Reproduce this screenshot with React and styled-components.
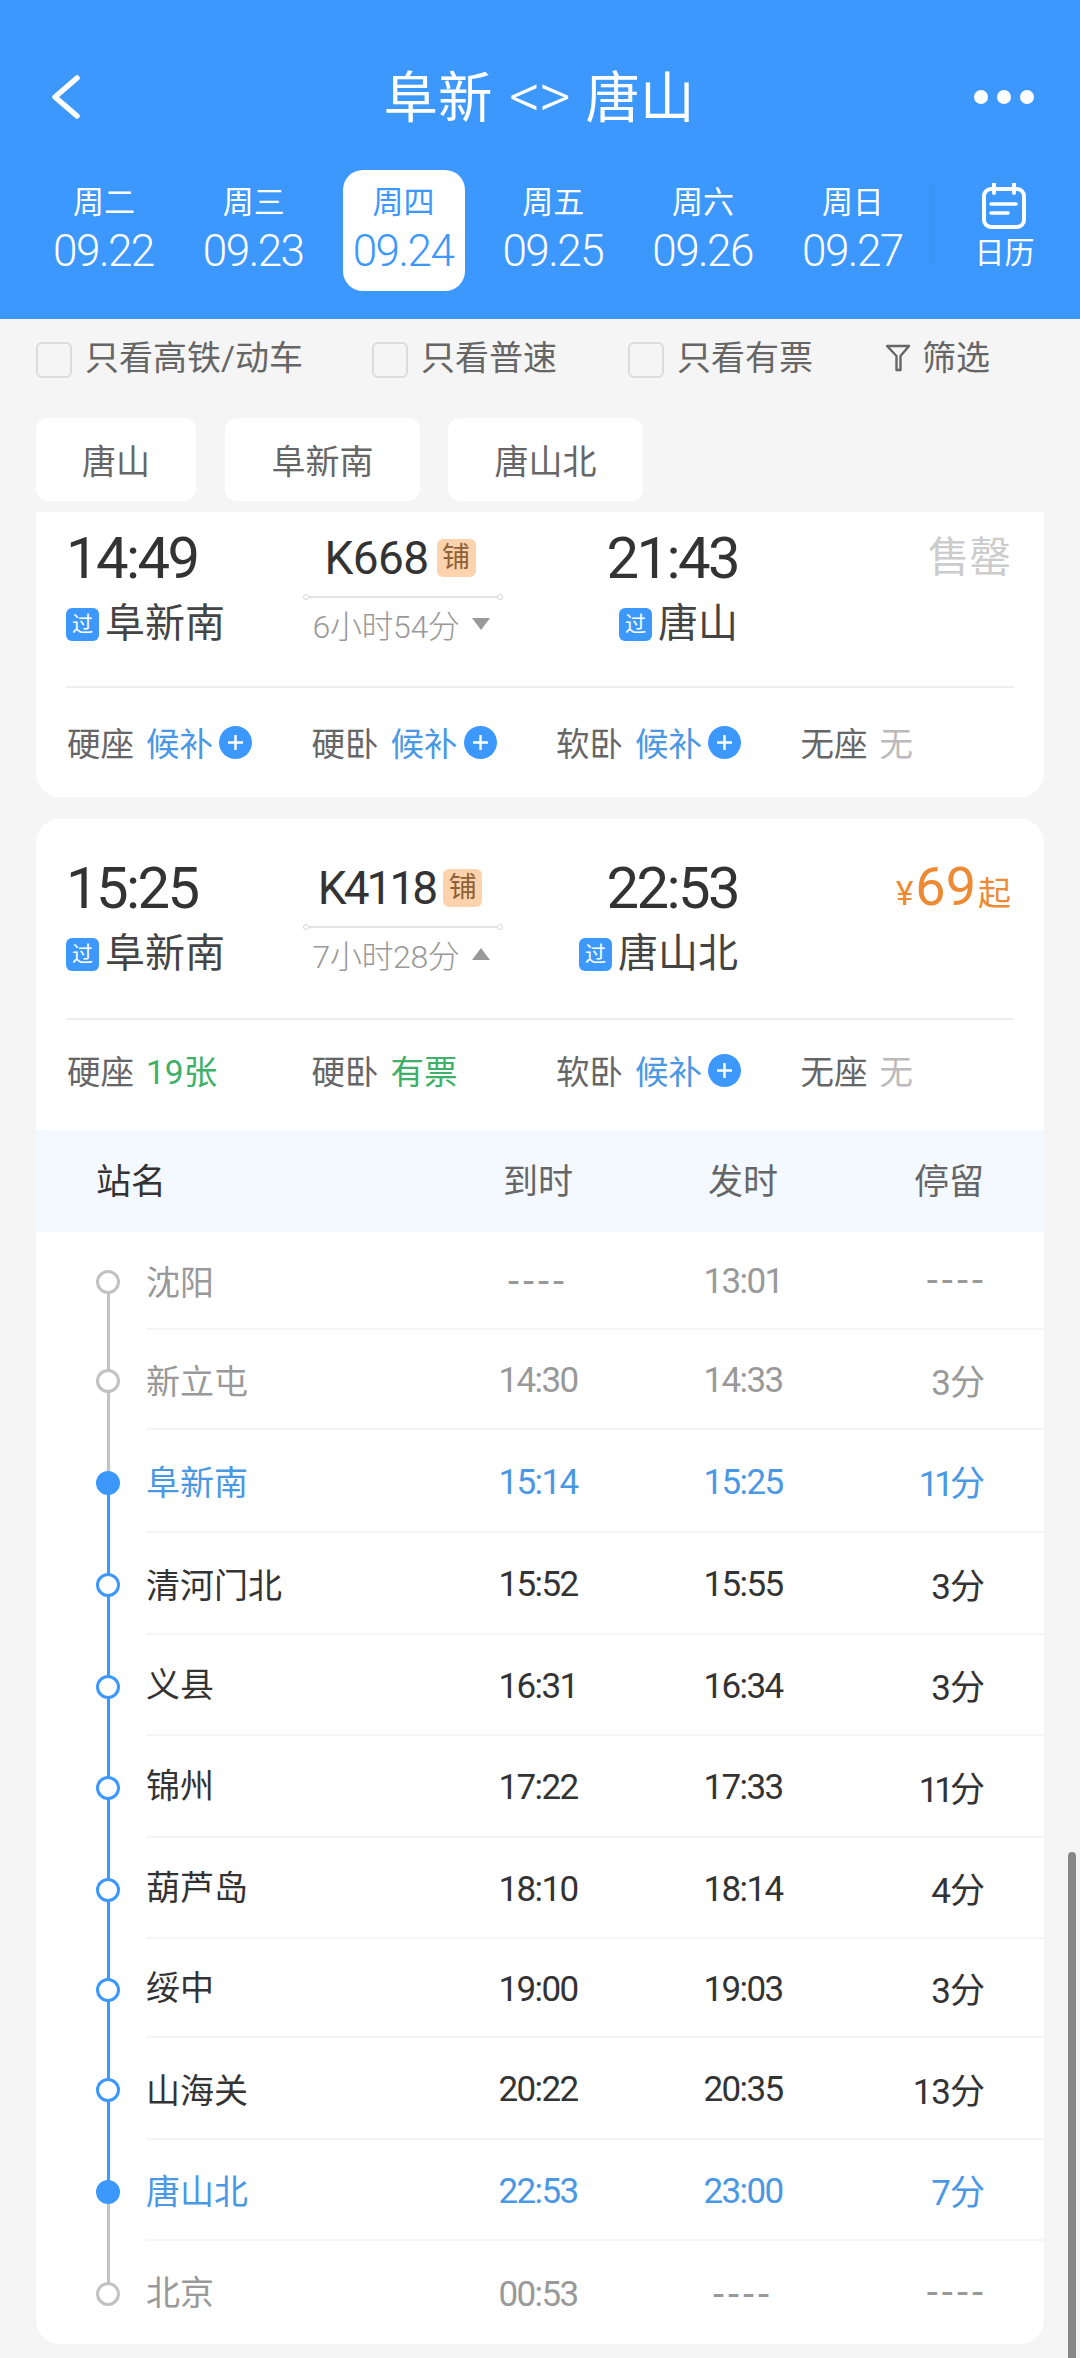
import React from "react";
import styled, { createGlobalStyle } from "styled-components";

const Global = createGlobalStyle`
  html, body { margin: 0; padding: 0; background: #f5f5f5; }
  body { font-family: Roboto, "Noto Sans CJK SC", sans-serif; font-weight: 300; }
  * { box-sizing: border-box; }
`;

const BLUE = "#3c98fc";
const TEXT_BLUE = "#4a98e4";

const Page = styled.div`
  position: relative;
  width: 1080px;
  height: 2358px;
  overflow: hidden;
  background: #f5f5f5;
`;
const Header = styled.header`
  height: 319px;
  background: ${BLUE};
  color: #fff;
`;
const TitleBar = styled.div`
  height: 170px;
  padding: 24px 46px 0 48px;
  display: grid;
  grid-template-columns: 100px 1fr 100px;
  align-items: center;
`;
const BackIcon = styled.svg`
  display: block;
`;
const Title = styled.h1`
  margin: 0 0 0 -4px;
  font-size: 54.5px;
  font-weight: 400;
  line-height: 60px;
  text-align: center;
  word-spacing: 3px;
  white-space: nowrap;
`;
const TitleArrows = styled.span`
  font-size: 62px;
  font-weight: 300;
  line-height: 60px;
  letter-spacing: -2px;
`;
const Dots = styled.div`
  display: flex;
  justify-content: flex-end;
  gap: 9px;
`;
const Dot = styled.span`
  width: 14px;
  height: 14px;
  border-radius: 50%;
  background: #fff;
`;
const DateBar = styled.div`
  display: flex;
  padding-left: 30px;
  height: 121px;
`;
const DateTab = styled.div`
  width: 149.8px;
  display: flex;
  justify-content: center;
`;
const DateBox = styled.div`
  width: 122px;
  height: 121px;
  border-radius: 20px;
  background: ${(p) => (p.$active ? "#fff" : "transparent")};
  color: ${(p) => (p.$active ? BLUE : "#fff")};
  display: flex;
  flex-direction: column;
  align-items: center;
  padding-top: 15px;
`;
const Week = styled.div`
  font-size: 31px;
  line-height: 36px;
  font-weight: 400;
  margin-left: -2px;
`;
const DateNum = styled.div`
  font-size: 44px;
  line-height: 52px;
  letter-spacing: -1.5px;
  margin: 4px 0 0 -3px;
  white-space: nowrap;
`;
const CalendarTab = styled.div`
  position: relative;
  flex: 1;
  display: flex;
  flex-direction: column;
  align-items: center;
  padding: 13px 0 0 0;
  &::before {
    content: "";
    position: absolute;
    left: -1px;
    top: 12px;
    width: 8px;
    height: 82px;
    background: linear-gradient(90deg, rgba(40, 110, 200, 0.02), rgba(40, 110, 200, 0.1) 60%, rgba(40, 110, 200, 0));
  }
`;
const CalendarLabel = styled.div`
  font-size: 30px;
  line-height: 34px;
  margin-top: 7px;
  font-weight: 400;
`;

const FilterRow = styled.div`
  height: 78px;
  padding-left: 36px;
  display: grid;
  grid-template-columns: 336px 256px 257px auto;
  align-items: center;
`;
const FilterItem = styled.label`
  display: flex;
  align-items: center;
  gap: 13px;
  font-size: 34px;
  font-weight: 400;
  color: #666;
  line-height: 40px;
  white-space: nowrap;
`;
const Checkbox = styled.span`
  width: 36px;
  height: 36px;
  flex: none;
  border-radius: 6px;
  border: 2px solid #dcdcdc;
  background: #f5f5f5;
  margin-top: 3px;
`;
const FilterButton = styled(FilterItem)`
  gap: 11px;
`;
const ChipRow = styled.div`
  display: flex;
  padding: 21px 0 0 36px;
`;
const Chip = styled.div`
  height: 83px;
  width: ${(p) => p.$w}px;
  margin-right: ${(p) => p.$gap}px;
  background: #fff;
  border-radius: 12px;
  display: flex;
  align-items: center;
  justify-content: center;
  font-size: 34px;
  font-weight: 400;
  color: #666;
`;

const CardList = styled.div`
  padding: 11px 36px 0;
  display: flex;
  flex-direction: column;
  gap: 22px;
`;
const Card = styled.section`
  background: #fff;
  border-radius: ${(p) => (p.$clipped ? "0 0 24px 24px" : "24px")};
  overflow: hidden;
`;
const Summary = styled.div`
  margin: 0 30px;
  padding-top: ${(p) => p.$top}px;
  height: ${(p) => p.$height}px;
  border-bottom: 2px solid #eeeeee;
  display: grid;
  grid-template-columns: 224px 226px 222px 1fr;
`;
const Endpoint = styled.div`
  display: flex;
  flex-direction: column;
  align-items: ${(p) => (p.$right ? "flex-end" : "flex-start")};
`;
const Clock = styled.div`
  font-size: 58px;
  line-height: 52px;
  letter-spacing: -2.6px;
  color: #333;
  font-weight: 400;
`;
const Station = styled.div`
  margin-top: 14px;
  height: 52px;
  display: flex;
  align-items: center;
  gap: 6px;
  font-size: 40px;
  font-weight: 400;
  color: #444;
  line-height: 52px;
  white-space: nowrap;
`;
const PassBadge = styled.span`
  width: 33px;
  height: 33px;
  border-radius: 6px;
  background: ${BLUE};
  color: #fff;
  font-size: 21px;
  line-height: 33px;
  text-align: center;
`;
const Middle = styled.div`
  display: flex;
  flex-direction: column;
  align-items: center;
`;
const TrainRow = styled.div`
  height: 52px;
  display: flex;
  align-items: center;
  gap: 8px;
  padding-right: 6px;
`;
const TrainNo = styled.span`
  font-size: 46px;
  letter-spacing: ${(p) => p.$ls}px;
  color: #333;
  font-weight: 400;
`;
const BerthBadge = styled.span`
  width: 39px;
  height: 38px;
  border-radius: 6px;
  background: #fdd3ae;
  color: #8d6238;
  font-size: 28px;
  line-height: 38px;
  text-align: center;
  font-weight: 400;
`;
const RouteLine = styled.div`
  width: 200px;
  height: 8px;
  margin-top: 9px;
  display: flex;
  align-items: center;
`;
const RouteEnd = styled.span`
  width: 6px;
  height: 6px;
  flex: none;
  border-radius: 50%;
  border: 1px solid #d8d8d8;
  background: #fff;
`;
const RouteBar = styled.span`
  flex: 1;
  height: 2px;
  background: #e2e2e2;
`;
const Duration = styled.div`
  margin-top: 2px;
  height: 42px;
  display: flex;
  align-items: center;
  gap: 12px;
  font-size: 32px;
  letter-spacing: -0.4px;
  color: #999;
  padding-right: 2px;
  white-space: nowrap;
`;
const Price = styled.div`
  justify-self: end;
  margin: -3px 3px 0 0;
  color: #ec8a35;
  display: flex;
  align-items: baseline;
  height: 56px;
  line-height: 56px;
`;
const PriceSmall = styled.span`
  font-size: 33px;
  font-weight: 400;
`;
const PriceBig = styled.span`
  font-size: 54px;
  margin: 0 2px;
  font-weight: 400;
`;
const SoldOut = styled.div`
  justify-self: end;
  margin-right: 3px;
  font-size: 41.5px;
  line-height: 52px;
  color: #ccc;
  font-weight: 400;
`;
const Seats = styled.div`
  margin: 0 0 0 30px;
  height: ${(p) => p.$height}px;
  padding-bottom: ${(p) => p.$bottom}px;
  display: grid;
  grid-template-columns: repeat(4, 244.5px);
  align-items: center;
`;
const Seat = styled.div`
  display: flex;
  align-items: center;
  font-size: 33.5px;
  font-weight: 400;
  color: #666;
  padding-left: 1px;
  white-space: nowrap;
`;
const SeatValue = styled.span`
  margin-left: 12px;
  color: ${(p) => p.$color};
`;
const PlusCircle = styled.svg`
  width: 33px;
  height: 33px;
  margin-left: 6px;
  margin-top: 2px;
`;
const TableHead = styled.div`
  height: 102px;
  background: #f4f9ff;
  padding: 0 0 5px 60px;
  display: grid;
  grid-template-columns: 338px 208px 202px 140px;
  align-items: center;
  font-size: 35px;
  font-weight: 400;
  color: #666;
`;
const HeadName = styled.div`
  color: #333;
`;
const HeadCell = styled.div`
  text-align: ${(p) => p.$align};
`;
const StopRow = styled.div`
  position: relative;
  height: ${(p) => p.$h}px;
  padding-left: 110px;
`;
const StopBody = styled.div`
  height: 100%;
  border-bottom: ${(p) => (p.$last ? "none" : "2px solid #f5f5f5")};
  display: grid;
  grid-template-columns: 288px 208px 202px 140px;
  align-items: center;
  font-size: 34px;
  font-weight: 400;
  color: ${(p) => p.$color};
`;
const StopName = styled.div`
  white-space: nowrap;
  margin-bottom: ${(p) => (p.$up ? 5 : 0)}px;
`;
const StopCell = styled.div`
  text-align: center;
  font-size: 35px;
  letter-spacing: -1.6px;
  padding-top: 3px;
`;
const StopStay = styled.div`
  text-align: right;
  font-size: 35px;
  letter-spacing: ${(p) => p.$ls}px;
  padding-right: ${(p) => -p.$ls - 1}px;
`;
const Dashes = styled.span`
  font-size: 40px;
  letter-spacing: 4px;
  margin-right: ${(p) => (p.$end ? -3 : 0)}px;
`;
const Node = styled.span`
  position: absolute;
  left: 60px;
  top: calc(50% - 11px);
  z-index: 2;
  width: 24px;
  height: 24px;
  border-radius: 50%;
  background: ${(p) => (p.$filled ? BLUE : "#fff")};
  border: 3px solid ${(p) => p.$color};
`;
const Segment = styled.span`
  position: absolute;
  left: 71px;
  top: calc(50% + 1px);
  z-index: 1;
  width: 3px;
  height: ${(p) => p.$h}px;
  background: ${(p) => p.$color};
`;
const ScrollThumb = styled.div`
  position: absolute;
  right: 4px;
  top: 1852px;
  bottom: 0;
  width: 8px;
  background: #888;
  border-radius: 4px 4px 0 0;
`;

const Plus = () => (
  <PlusCircle viewBox="0 0 33 33">
    <circle cx="16.5" cy="16.5" r="16.5" fill={BLUE} />
    <path d="M16.5 9v15M9 16.5h15" stroke="#fff" strokeWidth="2.4" />
  </PlusCircle>
);
const Triangle = ({ up }) => (
  <svg width="20" height="14" viewBox="0 0 20 14">
    <path d={up ? "M10 1l9 12H1z" : "M10 13L1 1h18z"} fill="#999" />
  </svg>
);

const dates = [
  ["周二", "09.22"],
  ["周三", "09.23"],
  ["周四", "09.24"],
  ["周五", "09.25"],
  ["周六", "09.26"],
  ["周日", "09.27"],
];
const GRAY = "#999";
const DARK = "#333";
const GL = "#c2c2c2";
const stops = [
  { n: "沈阳", a: "----", d: "13:01", s: "----", c: GRAY, h: 98, line: GL, node: GL },
  { n: "新立屯", a: "14:30", d: "14:33", s: "3分", c: GRAY, h: 100, line: GL, node: GL },
  { n: "阜新南", a: "15:14", d: "15:25", s: "11分", c: TEXT_BLUE, h: 103, line: BLUE, node: BLUE, filled: true },
  { n: "清河门北", a: "15:52", d: "15:55", s: "3分", c: DARK, h: 102, line: BLUE, node: BLUE },
  { n: "义县", a: "16:31", d: "16:34", s: "3分", c: DARK, h: 101, line: BLUE, node: BLUE, up: true },
  { n: "锦州", a: "17:22", d: "17:33", s: "11分", c: DARK, h: 102, line: BLUE, node: BLUE, up: true },
  { n: "葫芦岛", a: "18:10", d: "18:14", s: "4分", c: DARK, h: 101, line: BLUE, node: BLUE, up: true },
  { n: "绥中", a: "19:00", d: "19:03", s: "3分", c: DARK, h: 99, line: BLUE, node: BLUE, up: true },
  { n: "山海关", a: "20:22", d: "20:35", s: "13分", c: DARK, h: 102, line: BLUE, node: BLUE },
  { n: "唐山北", a: "22:53", d: "23:00", s: "7分", c: TEXT_BLUE, h: 101, line: GL, node: BLUE, filled: true },
  { n: "北京", a: "00:53", d: "----", s: "----", c: GRAY, h: 103, node: GL, up: true },
];

const SeatCell = ({ label, value, color, plus }) => (
  <Seat>
    {label}
    <SeatValue $color={color}>{value}</SeatValue>
    {plus && <Plus />}
  </Seat>
);

const Train = ({ top, height, dep, arr, from, to, no, ls, dur, up, children }) => (
  <Summary $top={top} $height={height}>
    <Endpoint>
      <Clock>{dep}</Clock>
      <Station>
        <PassBadge>过</PassBadge>
        {from}
      </Station>
    </Endpoint>
    <Middle>
      <TrainRow>
        <TrainNo $ls={ls}>{no}</TrainNo>
        <BerthBadge>铺</BerthBadge>
      </TrainRow>
      <RouteLine>
        <RouteEnd />
        <RouteBar />
        <RouteEnd />
      </RouteLine>
      <Duration>
        {dur}
        <Triangle up={up} />
      </Duration>
    </Middle>
    <Endpoint $right>
      <Clock>{arr}</Clock>
      <Station>
        <PassBadge>过</PassBadge>
        {to}
      </Station>
    </Endpoint>
    {children}
  </Summary>
);

export default function App() {
  return (
    <Page>
      <Global />
      <Header>
        <TitleBar>
          <BackIcon width="36" height="48" viewBox="0 0 36 48">
            <path d="M29 5L7 24l22 19" fill="none" stroke="#fff" strokeWidth="5.5" strokeLinecap="round" strokeLinejoin="round" />
          </BackIcon>
          <Title>
            阜新 <TitleArrows>&lt;&gt;</TitleArrows> 唐山
          </Title>
          <Dots>
            <Dot />
            <Dot />
            <Dot />
          </Dots>
        </TitleBar>
        <DateBar>
          {dates.map(([w, d], i) => (
            <DateTab key={d}>
              <DateBox $active={i === 2}>
                <Week>{w}</Week>
                <DateNum>{d}</DateNum>
              </DateBox>
            </DateTab>
          ))}
          <CalendarTab>
            <svg width="46" height="46" viewBox="0 0 46 46">
              <rect x="3" y="6" width="40" height="38" rx="7" fill="none" stroke="#fff" strokeWidth="4" />
              <path d="M13 1v9M33 1v9" stroke="#fff" strokeWidth="4" strokeLinecap="round" />
              <path d="M10 21h25M10 30h17" stroke="#fff" strokeWidth="3.5" strokeLinecap="round" />
            </svg>
            <CalendarLabel>日历</CalendarLabel>
          </CalendarTab>
        </DateBar>
      </Header>

      <FilterRow>
        <FilterItem>
          <Checkbox />
          只看高铁/动车
        </FilterItem>
        <FilterItem>
          <Checkbox />
          只看普速
        </FilterItem>
        <FilterItem>
          <Checkbox />
          只看有票
        </FilterItem>
        <FilterButton>
          <svg width="26" height="28" viewBox="0 0 26 28">
            <path d="M2 2h22l-8.5 10v14l-4-0V12z" fill="none" stroke="#666" strokeWidth="2.4" strokeLinejoin="round" />
          </svg>
          筛选
        </FilterButton>
      </FilterRow>
      <ChipRow>
        <Chip $w={160} $gap={29}>唐山</Chip>
        <Chip $w={195} $gap={28}>阜新南</Chip>
        <Chip $w={195} $gap={0}>唐山北</Chip>
      </ChipRow>

      <CardList>
        <Card $clipped>
          <Train top={20} height={176} dep="14:49" arr="21:43" from="阜新南" to="唐山" no="K668" ls={-0.6} dur="6小时54分">
            <SoldOut>售罄</SoldOut>
          </Train>
          <Seats $height={109} $bottom={2}>
            <SeatCell label="硬座" value="候补" color={TEXT_BLUE} plus />
            <SeatCell label="硬卧" value="候补" color={TEXT_BLUE} plus />
            <SeatCell label="软卧" value="候补" color={TEXT_BLUE} plus />
            <SeatCell label="无座" value="无" color="#bbb" />
          </Seats>
        </Card>
        <Card>
          <Train top={43} height={201} dep="15:25" arr="22:53" from="阜新南" to="唐山北" no="K4118" ls={-3} dur="7小时28分" up>
            <Price>
              <PriceSmall>¥</PriceSmall>
              <PriceBig>69</PriceBig>
              <PriceSmall>起</PriceSmall>
            </Price>
          </Train>
          <Seats $height={110} $bottom={11}>
            <SeatCell label="硬座" value="19张" color="#3fb06a" />
            <SeatCell label="硬卧" value="有票" color="#3fb06a" />
            <SeatCell label="软卧" value="候补" color={TEXT_BLUE} plus />
            <SeatCell label="无座" value="无" color="#bbb" />
          </Seats>
          <TableHead>
            <HeadName>站名</HeadName>
            <HeadCell $align="center">到时</HeadCell>
            <HeadCell $align="center">发时</HeadCell>
            <HeadCell $align="right">停留</HeadCell>
          </TableHead>
          {stops.map((s, i) => {
            const show = (v) => (v === "----" ? <Dashes>{v}</Dashes> : v);
            return (
              <StopRow key={s.n} $h={s.h}>
                {s.line && <Segment $color={s.line} $h={s.h + 2} />}
                <Node $color={s.node} $filled={s.filled} />
                <StopBody $color={s.c} $last={i === stops.length - 1}>
                  <StopName $up={s.up}>{s.n}</StopName>
                  <StopCell>{show(s.a)}</StopCell>
                  <StopCell>{show(s.d)}</StopCell>
                  <StopStay $ls={s.s === "11分" ? -4 : -1}>
                    {s.s === "----" ? <Dashes $end>{s.s}</Dashes> : s.s}
                  </StopStay>
                </StopBody>
              </StopRow>
            );
          })}
        </Card>
      </CardList>
      <ScrollThumb />
    </Page>
  );
}
